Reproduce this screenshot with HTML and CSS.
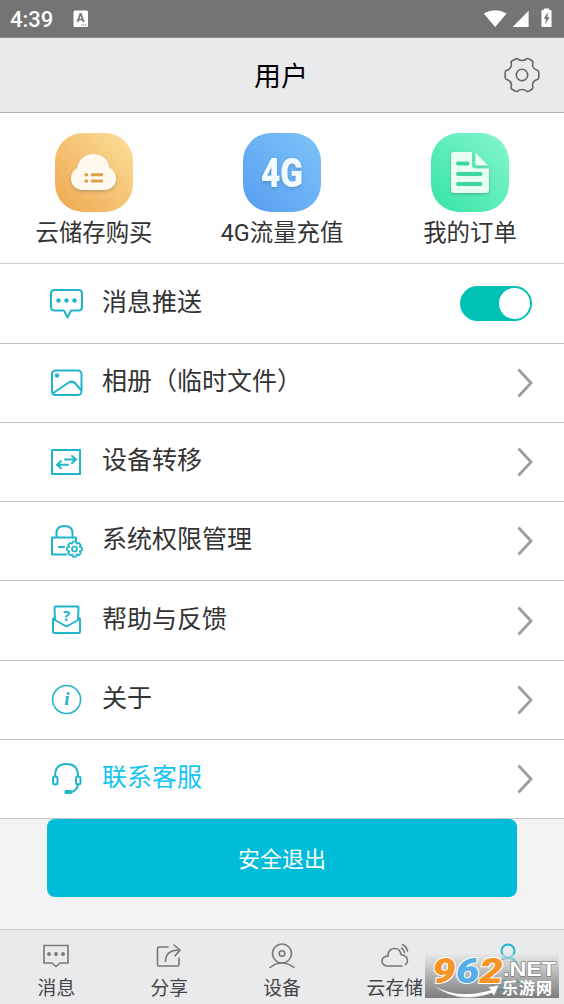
FILE: index.html
```html
<!DOCTYPE html>
<html lang="zh-CN">
<head>
<meta charset="utf-8">
<title>用户</title>
<link rel="stylesheet" href="styles.css">
</head>
<body>
<div class="screen">
  <div class="status">
    <span class="clock">4:39</span>
    <svg class="status-app" width="16" height="18" viewBox="0 0 16 18"><rect x=".5" y=".5" width="14.500" height="16.500" rx="1.500" fill="#fff"/><text x="7.500" y="12.300" text-anchor="middle" class="app-letter">A</text><path d="M8 15h6" stroke="#888" stroke-width="1" stroke-dasharray="1.500 .5"/></svg>
    <svg class="status-icons" width="72" height="24" viewBox="0 0 72 24"><path d="M-2.500 5Q10-2.500 22.500 5L10 19.500Z" fill="#fff"/><path d="M46.500 2v17.500H29Z" fill="#fff"/><path d="M60.500 2q0-1 1-1h1.500V-.5h6V1h1.500q1 0 1 1v17.500h-11Z" fill="#fff"/><path d="M67.500 3.500l-4.500 7h2.500l-1 6 5-7.500h-2.500Z" fill="#747474"/></svg>
  </div>

  <header class="header">
    <h1 class="title">用户</h1>
    <svg class="gear" width="36" height="36" viewBox="0 0 36 36" fill="none" stroke="#666" stroke-width="1.600" stroke-linejoin="round"><path d="M11 2.500Q12 1 13.500 1.800C16 4 20 4 22.500 1.800Q24 1 25 2L28 3.800Q29.300 4.600 28.800 6.200C28 9.500 30 12.300 33.200 13.300Q34.800 13.800 34.800 15.500V20.500Q34.800 22 33.200 22.600C30 23.700 28 26.500 28.800 29.800Q29.300 31.400 28 32.200L25 34Q24 35 22.500 34.200C20 32 16 32 13.500 34.200Q12 35 11 34L8 32.200Q6.700 31.400 7.200 29.800C8 26.500 6 23.700 2.800 22.600Q1.200 22 1.200 20.500V15.500Q1.200 13.800 2.800 13.300C6 12.300 8 9.500 7.200 6.200Q6.700 4.600 8 3.800Z"/><circle cx="18" cy="18" r="5.700"/></svg>
  </header>

  <nav class="quick">
    <a class="quick-item">
      <svg width="78" height="79" viewBox="0 0 78 79">
        <defs><linearGradient id="gold" x1="0" y1="1" x2="1" y2="0"><stop offset="0" stop-color="#efa84e"/><stop offset="1" stop-color="#fbdf9b"/></linearGradient><filter id="shade" x="-20%" y="-20%" width="140%" height="150%"><feDropShadow dx="0" dy="1.500" stdDeviation="1.500" flood-color="#345" flood-opacity=".28"/></filter></defs>
        <rect width="78" height="79" rx="28" fill="url(#gold)"/>
        <path d="M28 57C21 57 16 52 16 45.500C16 41 18.500 37 22.500 35C23 27 30 21 38.500 21S54 27 54.500 35C58.500 37 61 41 61 45.500C61 52 56 57 49 57Z" fill="#fff9f0" filter="url(#shade)"/>
        <path d="M29.500 41.700h3.500M36 41.700h12M29.500 48h3.500M36 48h12" stroke="#dda14d" stroke-width="3"/>
      </svg>
      <span>云储存购买</span>
    </a>
    <a class="quick-item">
      <svg width="78" height="79" viewBox="0 0 78 79">
        <defs><linearGradient id="blue" x1="0" y1="1" x2="1" y2="0"><stop offset="0" stop-color="#579df1"/><stop offset="1" stop-color="#7dc5f8"/></linearGradient></defs>
        <rect width="78" height="79" rx="28" fill="url(#blue)"/>
        <text x="18" y="54" textLength="42" lengthAdjust="spacingAndGlyphs" class="mobile-mark" filter="url(#shade)">4G</text>
      </svg>
      <span>4G流量充值</span>
    </a>
    <a class="quick-item">
      <svg width="78" height="79" viewBox="0 0 78 79">
        <defs><linearGradient id="mint" x1="0" y1="1" x2="1" y2="0"><stop offset="0" stop-color="#34e4a3"/><stop offset="1" stop-color="#87f7cd"/></linearGradient></defs>
        <rect width="78" height="79" rx="28" fill="url(#mint)"/>
        <g filter="url(#shade)"><path d="M23 19H41V32Q41 35.500 44.500 35.500H58V56.500Q58 60 54.500 60H23.500Q20 60 20 56.500V22Q20 19 23 19Z" fill="#e8fdf4"/><path d="M44.500 19.500V30Q44.500 32.500 47 32.500H57Z" fill="#e8fdf4"/></g>
        <path d="M27 30.500h9.500M27 41h22.500M27 51h22.500" stroke="#3bd8a0" stroke-width="4" stroke-linecap="round"/>
      </svg>
      <span>我的订单</span>
    </a>
  </nav>

  <main class="list">
    <div class="row">
      <svg class="icon" viewBox="0 0 36 36"><path d="M5 4H29.500Q33 4 33 7.500V21Q33 24.500 29.500 24.500H22L18.500 31.500L15 24.500H5.500Q2 24.500 2 21V7.500Q2 4 5 4Z"/><g class="solid"><circle cx="9.500" cy="14.500" r="2.200"/><circle cx="17.500" cy="14.500" r="2.200"/><circle cx="25.500" cy="14.500" r="2.200"/></g></svg>
      <span class="label">消息推送</span><span class="toggle"><i class="knob"></i></span>
    </div>
    <div class="row">
      <svg class="icon" viewBox="0 0 36 36"><rect x="3" y="5.500" width="29.500" height="24.500" rx="3.500"/><path d="M3.500 28.500L19 18Q23 15 26.500 18.500L32 25"/><circle class="solid" cx="8" cy="10.500" r="2.200"/></svg>
      <span class="label">相册（临时文件）</span><svg class="chevron" viewBox="0 0 16 30"><path d="M1.500 1.500L14 15L1.500 28.500"/></svg>
    </div>
    <div class="row">
      <svg class="icon" viewBox="0 0 36 36"><rect x="3" y="6" width="28" height="24"/><path d="M16 15.500H27M23 12L27 15.500L23 19M19 20.700H8M12 17.200L8 20.700L12 24.200"/></svg>
      <span class="label">设备转移</span><svg class="chevron" viewBox="0 0 16 30"><path d="M1.500 1.500L14 15L1.500 28.500"/></svg>
    </div>
    <div class="row">
      <svg class="icon" viewBox="0 0 36 36"><path d="M17 31.500H3V14.500H27V18.500M7.500 14V10Q7.500 3 15.500 3T23.500 10V14M10 24H15"/><path d="M24 18.500h3l.7 2.200 2-.8 2 2-1 2 2.300.8v2.800l-2.300.8 1 2-2 2-2-.9-.7 2.300h-3l-.8-2.300-2 1-2-2 1-2.100-2.200-.8v-2.800l2.200-.8-1-2 2-2 2 .8Z" stroke-width="1.700"/><circle cx="25.500" cy="26" r="2.500" stroke-width="1.700"/></svg>
      <span class="label">系统权限管理</span><svg class="chevron" viewBox="0 0 16 30"><path d="M1.500 1.500L14 15L1.500 28.500"/></svg>
    </div>
    <div class="row">
      <svg class="icon" viewBox="0 0 36 36"><path d="M6 17L5.500 4.500Q5.500 3.500 6.500 3.500H28.500Q29.500 3.500 29.500 4.500L29 17M4 16L17.500 23.500L31 16V28.500Q31 30 29.500 30H5.500Q4 30 4 28.500ZM4 16L6 14M31 16L29 14"/><text class="question" x="17.500" y="18" text-anchor="middle">?</text></svg>
      <span class="label">帮助与反馈</span><svg class="chevron" viewBox="0 0 16 30"><path d="M1.500 1.500L14 15L1.500 28.500"/></svg>
    </div>
    <div class="row">
      <svg class="icon" viewBox="0 0 36 36"><circle cx="17.600" cy="17.500" r="14" stroke-width="1.600"/><text class="info" x="18" y="23" text-anchor="middle">i</text></svg>
      <span class="label">关于</span><svg class="chevron" viewBox="0 0 16 30"><path d="M1.500 1.500L14 15L1.500 28.500"/></svg>
    </div>
    <div class="row">
      <svg class="icon" viewBox="0 0 36 36"><path d="M6 15Q6 3 17.500 3T29 15M29 23.500Q28 29.500 22 31.300"/><rect x="4" y="15.500" width="4.500" height="8" rx="2"/><rect x="27" y="15.500" width="4.500" height="8" rx="2"/><rect class="solid" x="15.500" y="29" width="7.500" height="4" rx="1.500"/></svg>
      <span class="label accent">联系客服</span><svg class="chevron" viewBox="0 0 16 30"><path d="M1.500 1.500L14 15L1.500 28.500"/></svg>
    </div>
  </main>

  <div class="logout-area"><button class="logout">安全退出</button></div>

  <footer class="tabs">
    <a class="tab"><svg viewBox="0 0 30 30"><path d="M3 4.500H27V22H19L15 25.500L11 22H3Z"/><g class="dot"><circle cx="8" cy="13" r="1.900"/><circle cx="15" cy="13" r="1.900"/><circle cx="22" cy="13" r="1.900"/></g></svg><span>消息</span></a>
    <a class="tab"><svg viewBox="0 0 30 30"><path d="M14 6H5Q3.500 6 3.500 7.500V23.500Q3.500 25 5 25H23.500Q25 25 25 23.500V17M11.500 20.500Q11.500 9 25.500 9M20 4L26 9L21 15"/></svg><span>分享</span></a>
    <a class="tab"><svg viewBox="0 0 30 30"><circle cx="15" cy="12.500" r="9.500"/><circle cx="15" cy="12.500" r="2.800"/><path d="M3 26.500Q8.500 22 15 22T27 26.500"/></svg><span>设备</span></a>
    <a class="tab"><svg viewBox="0 0 30 30"><path d="M22 25H7.500Q2 24.500 2 20T8 15Q8 8 14 7.500T21 13.500Q27.500 15 27.500 19.500Q27.500 22 25.500 23.500M21.500 7Q24 8.500 24.500 11.500M22.500 3.500Q26.500 5.500 27.500 10" /></svg><span>云存储</span></a>
    <a class="tab active"><svg viewBox="0 0 30 30"><circle cx="15" cy="10" r="6.500"/><path d="M5 27.500Q6 17 15 17T25 27.500"/></svg><span>用户</span></a>
  </footer>

  <div class="watermark">
    <svg width="134" height="44" viewBox="0 0 134 44">
      <text class="wm-number" x="7" y="28.500" textLength="71" lengthAdjust="spacingAndGlyphs"><tspan fill="#f79428">9</tspan><tspan fill="#58aee8">6</tspan><tspan fill="#f79428">2</tspan></text>
      <path d="M8 31Q32 46 66 36L63 33L74 31L69 42L67 39Q32 51 8 31Z" fill="#fff" stroke="#888" stroke-width=".4"/>
      <text class="wm-net" x="78" y="22" textLength="53" lengthAdjust="spacingAndGlyphs">.NET</text>
      <text class="wm-name" x="77" y="40" textLength="50">乐游网</text>
    </svg>
  </div>
</div>
</body>
</html>
```
FILE: styles.css
```css
* { box-sizing: border-box; }
body { margin: 0; font-family: Roboto, "Noto Sans CJK SC", sans-serif; color: #333; }
.screen { position: relative; display: flex; flex-direction: column; width: 564px; height: 1004px; overflow: hidden; background: #f3f3f3; }

.status { display: flex; align-items: center; height: 38px; padding: 0 10px; background: #747474; border-bottom: 1px solid #919191; color: #fff; }
.clock { width: 63px; font-size: 22px; font-weight: 500; line-height: 38px; padding-top: 2px; }
.app-letter { font: bold 12px Roboto, sans-serif; fill: #747474; }
.status-icons { margin-left: auto; margin-right: -1px; padding-top: 2px; overflow: visible; }

.header { display: grid; grid-template-columns: 1fr auto 1fr; align-items: center; height: 75px; padding: 0 24px; background: #e9eaec; border-bottom: 1px solid #b4b4b5; }
.title { grid-column: 2; margin: 0; padding: 4px 2px 0 0; font-size: 27px; font-weight: 400; line-height: 38px; color: #000; }
.gear { justify-self: end; }

.quick { display: grid; grid-template-columns: repeat(3, 1fr); height: 151px; padding-top: 20px; background: #fff; border-bottom: 1px solid #cfcfcf; }
.quick-item { display: flex; flex-direction: column; align-items: center; font-size: 23.4px; line-height: 34px; gap: 4px; }
.quick-item svg { display: block; }
.mobile-mark { font: 900 41px Roboto, sans-serif; fill: #f2f9ff; }

.list { padding-top: .7px; background: #fff; }
.row { display: flex; align-items: center; height: 79.2px; padding: 0 31px 0 49px; border-bottom: 1px solid #c4c4c4; }
.icon { width: 36px; height: 36px; fill: none; stroke: #20b5cb; stroke-width: 2; stroke-linejoin: round; stroke-linecap: round; }
.icon .solid { fill: #20b5cb; stroke: none; }
.question { font: bold 15px "Noto Sans", sans-serif; fill: #20b5cb; stroke: none; }
.info { font: italic bold 19px "Liberation Serif", serif; fill: #20b5cb; stroke: none; }
.label { margin-left: 17px; padding-bottom: 2px; font-size: 25px; line-height: 36px; }
.accent { color: #14c4f2; }
.chevron { width: 16px; height: 30px; margin-left: auto; fill: none; stroke: #9d9d9d; stroke-width: 2.8; }
.toggle { display: flex; justify-content: flex-end; align-items: center; width: 72px; height: 35px; margin-left: auto; margin-right: 1px; padding: 2px; border-radius: 18px; background: #00c1b6; }
.knob { width: 31px; height: 31px; border-radius: 50%; background: #fff; }

.logout-area { flex: 1; padding: 0 47px; }
.logout { display: block; width: 470px; height: 78px; padding: 0 0 2px; border: 0; border-radius: 8px; background: #00bcd8; color: #fff; font: 22px Roboto, "Noto Sans CJK SC", sans-serif; }

.tabs { display: grid; grid-template-columns: repeat(5, 1fr); height: 75px; border-top: 1px solid #cbcdd0; background: #e9eaec; }
.tab { display: flex; flex-direction: column; align-items: center; padding-top: 11px; font-size: 18.8px; line-height: 28px; gap: 4px; color: #444; }
.tab svg { width: 30px; height: 30px; fill: none; stroke: #777; stroke-width: 1.6; stroke-linecap: round; }
.tab .dot { fill: #777; stroke: none; }
.tab.active { color: #16aebb; }
.tab.active svg { stroke: #20b5cb; stroke-width: 2; }

.watermark { position: absolute; left: 425px; top: 954px; width: 134px; height: 44px; background: linear-gradient(rgba(229, 229, 229, .55), rgba(105, 105, 105, .85)); }
.watermark svg { display: block; overflow: visible; }
.wm-number { font: italic 900 35px Roboto, sans-serif; stroke: #fff; stroke-width: 2; paint-order: stroke; }
.wm-net { font: bold 20px "Liberation Sans", sans-serif; fill: #fff; stroke: #666; stroke-width: 1; paint-order: stroke; }
.wm-name { font: bold 16px "Noto Sans CJK SC", sans-serif; fill: #fff; }
```
